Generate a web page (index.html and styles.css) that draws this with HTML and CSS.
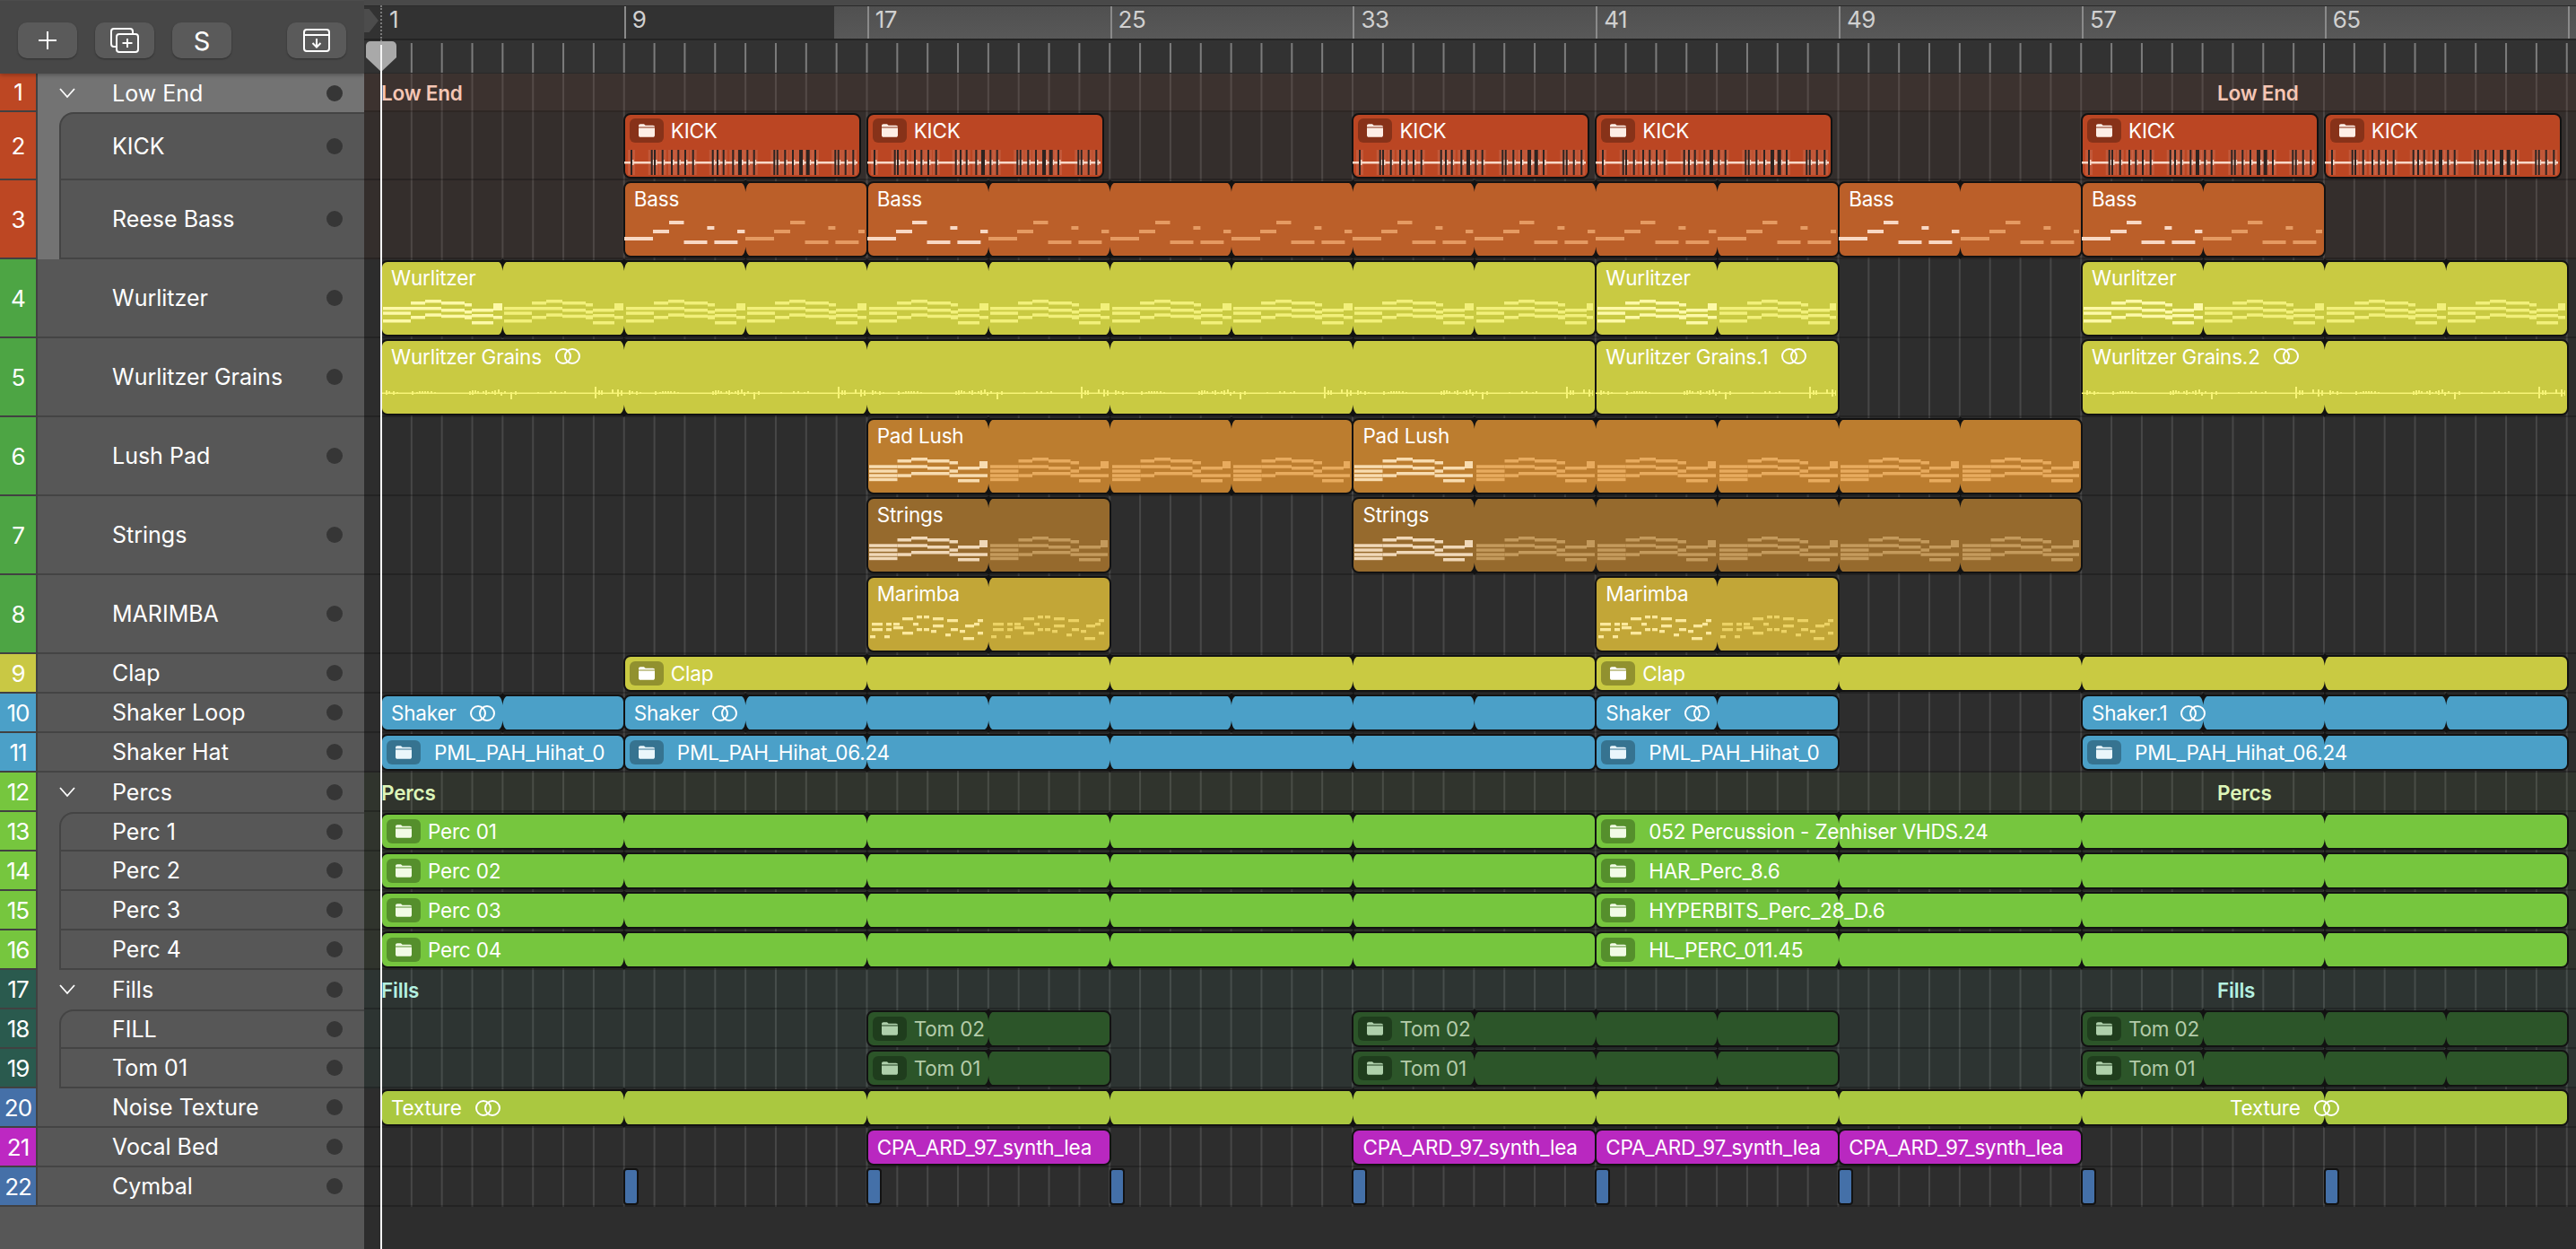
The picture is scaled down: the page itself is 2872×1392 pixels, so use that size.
FILE: index.html
```html
<!DOCTYPE html>
<html lang="en">
<head>
    <meta charset="UTF-8">
    <title>Arrangement</title>
    <link rel="stylesheet" href="styles.css">
</head>
<body>

<div class="window">
    <div class="tracklist">
        <div class="toolbar">
            <button class="tool-btn">
                <svg width="24" height="24" viewBox="0 0 24 24"><path d="M12 2V22M2 12H22"/></svg>
            </button>
            <button class="tool-btn">
                <svg width="34" height="28" viewBox="0 0 34 28"><path d="M7 21H5a3 3 0 0 1-3-3V4a3 3 0 0 1 3-3H23a3 3 0 0 1 3 3V7"/><rect x="8" y="7" width="24" height="20" rx="3"/><path d="M20 12V22M14.5 17H25.5"/></svg>
            </button>
            <button class="tool-btn tool-s">S</button>
            <button class="tool-btn tool-last">
                <svg width="32" height="26" viewBox="0 0 32 26"><rect x="2" y="1" width="28" height="24" rx="3"/><path d="M2 7H30M16 11V20M11.500 16L16 20.500 20.500 16"/></svg>
            </button>
        </div>

        <div class="track h-43 selected"><div class="num c1">1</div><div class="body group"><svg class="chev" width="18" height="12" viewBox="0 0 18 12"><path d="M1 1L9 10 17 1"/></svg><span class="name">Low End</span><i class="dot"></i></div></div>
        <div class="track h-76 selected"><div class="num c1">2</div><div class="strip"><div class="tile top"><span class="name">KICK</span><i class="dot"></i></div></div></div>
        <div class="track h-88 selected"><div class="num c1">3</div><div class="strip"><div class="tile"><span class="name">Reese Bass</span><i class="dot"></i></div></div></div>
        <div class="track h-88"><div class="num c4">4</div><div class="body"><span class="name">Wurlitzer</span><i class="dot"></i></div></div>
        <div class="track h-88"><div class="num c4">5</div><div class="body"><span class="name">Wurlitzer Grains</span><i class="dot"></i></div></div>
        <div class="track h-88"><div class="num c4">6</div><div class="body"><span class="name">Lush Pad</span><i class="dot"></i></div></div>
        <div class="track h-88"><div class="num c4">7</div><div class="body"><span class="name">Strings</span><i class="dot"></i></div></div>
        <div class="track h-88"><div class="num c4">8</div><div class="body"><span class="name">MARIMBA</span><i class="dot"></i></div></div>
        <div class="track h-44"><div class="num c9">9</div><div class="body"><span class="name">Clap</span><i class="dot"></i></div></div>
        <div class="track h-44"><div class="num c10">10</div><div class="body"><span class="name">Shaker Loop</span><i class="dot"></i></div></div>
        <div class="track h-44"><div class="num c10">11</div><div class="body"><span class="name">Shaker Hat</span><i class="dot"></i></div></div>
        <div class="track h-44"><div class="num c12">12</div><div class="body group"><svg class="chev" width="18" height="12" viewBox="0 0 18 12"><path d="M1 1L9 10 17 1"/></svg><span class="name">Percs</span><i class="dot"></i></div></div>
        <div class="track h-44"><div class="num c12">13</div><div class="strip"><div class="tile top"><span class="name">Perc 1</span><i class="dot"></i></div></div></div>
        <div class="track h-44"><div class="num c12">14</div><div class="strip"><div class="tile"><span class="name">Perc 2</span><i class="dot"></i></div></div></div>
        <div class="track h-44"><div class="num c12">15</div><div class="strip"><div class="tile"><span class="name">Perc 3</span><i class="dot"></i></div></div></div>
        <div class="track h-44"><div class="num c12">16</div><div class="strip"><div class="tile"><span class="name">Perc 4</span><i class="dot"></i></div></div></div>
        <div class="track h-44"><div class="num c17">17</div><div class="body group"><svg class="chev" width="18" height="12" viewBox="0 0 18 12"><path d="M1 1L9 10 17 1"/></svg><span class="name">Fills</span><i class="dot"></i></div></div>
        <div class="track h-44"><div class="num c17">18</div><div class="strip"><div class="tile top"><span class="name">FILL</span><i class="dot"></i></div></div></div>
        <div class="track h-44"><div class="num c17">19</div><div class="strip"><div class="tile"><span class="name">Tom 01</span><i class="dot"></i></div></div></div>
        <div class="track h-44"><div class="num c20">20</div><div class="body"><span class="name">Noise Texture</span><i class="dot"></i></div></div>
        <div class="track h-44"><div class="num c21">21</div><div class="body"><span class="name">Vocal Bed</span><i class="dot"></i></div></div>
        <div class="track h-44"><div class="num c20">22</div><div class="body"><span class="name">Cymbal</span><i class="dot"></i></div></div>
    </div>

    <div class="arrange">
        <div class="top-strip"></div>
        <div class="ruler">
            <div class="ruler-dark"></div>
            <div class="ruler-offset"></div>
            <div class="bar-label">1</div>
            <div class="bar-label">9</div>
            <div class="bar-label">17</div>
            <div class="bar-label">25</div>
            <div class="bar-label">33</div>
            <div class="bar-label">41</div>
            <div class="bar-label">49</div>
            <div class="bar-label">57</div>
            <div class="bar-label">65</div>
            <div class="bar-label"></div>
            <div class="cycle-mark"></div>
        </div>
        <div class="ticks"></div>
        <div class="lanes" id="lanes"></div>

        <!-- playhead sits over everything -->
        <div class="play-dash"></div>
        <svg class="play-head" width="34" height="34" viewBox="0 0 34 34"><path d="M5 0H29a5 5 0 0 1 5 5V18L17 34 0 18V5a5 5 0 0 1 5-5Z"/></svg>
        <div class="play-line"></div>
    </div>
</div>

<script src="script.js"></script>
</body>
</html>
```

FILE: styles.css
```css
* {
    margin: 0;
    padding: 0;
    box-sizing: border-box;
    font-family: 'Inter', 'Noto Sans', sans-serif;
}

body {
    width: 2872px;
    height: 1392px;
    overflow: hidden;
    background: #2d2d2d;
}

.window {
    display: flex;
    height: 100%;
}

/* Track list on the left */
.tracklist {
    width: 406px;
    flex: none;
    background: #575757;
    display: flex;
    flex-direction: column;
}

.toolbar {
    height: 82px;
    flex: none;
    display: flex;
    gap: 20px;
    padding: 24px 0 0 20px;
    background: #474747;
    border-top: 1px solid #4c4c4c;
    box-shadow: 0 2px 4px rgba(0, 0, 0, 0.25);
    position: relative;
}

.tool-btn {
    width: 66px;
    height: 40px;
    background: #5a5a5a;
    border: none;
    border-radius: 10px;
    box-shadow: 0 1px 2px rgba(0, 0, 0, 0.35);
    color: #fff;
    font-size: 29px;
    display: flex;
    align-items: center;
    justify-content: center;
}

.tool-btn svg {
    fill: none;
    stroke: #fff;
    stroke-width: 2;
}

.tool-last {
    margin-left: 42px;
}

.track {
    display: flex;
    flex: none;
}

.h-43 { height: 43px; }
.h-44 { height: 44px; }
.h-76 { height: 76px; }
.h-88 { height: 88px; }

.num {
    width: 42px;
    flex: none;
    display: flex;
    align-items: center;
    justify-content: center;
    color: #fff;
    font-size: 26px;
    letter-spacing: -1px;
    border-right: 2px solid #414141;
    border-bottom: 2px solid #414141;
}

.c1 { background: #bd4723; }
.c4 { background: #4da544; }
.c9 { background: #c9c844; }
.c10 { background: #4ba0c8; }
.c12 { background: #76c63e; }
.c17 { background: #2a5a4e; }
.c20 { background: #4570a8; }
.c21 { background: #bd28c2; }

.body {
    flex: 1;
    display: flex;
    align-items: center;
    padding: 0 24px 0 83px;
    border-bottom: 2px solid #444;
}

.body.group {
    padding-left: 24px;
    border-bottom: none;
}

.chev {
    fill: none;
    stroke: #fff;
    stroke-width: 1.8;
    margin-right: 41px;
    flex: none;
}

.strip {
    flex: 1;
    padding-left: 24px;
}

.tile {
    height: 100%;
    display: flex;
    align-items: center;
    padding: 0 24px 0 57px;
    background: #575757;
    border-left: 2px solid #444;
    border-bottom: 2px solid #444;
}

.tile.top {
    border-top: 2px solid #444;
    border-top-left-radius: 16px;
}

.selected .body,
.selected .strip {
    background: #737373;
}

.selected .tile {
    background: #565656;
}

.name {
    flex: 1;
    color: #fff;
    font-size: 25px;
    white-space: nowrap;
}

.dot {
    width: 18px;
    height: 18px;
    border-radius: 50%;
    background: #363636;
    flex: none;
}

/* Timeline */
.arrange {
    flex: 1;
    position: relative;
    overflow: hidden;
}

.top-strip {
    height: 6px;
    background: #494949;
}

.ruler {
    height: 39px;
    display: flex;
    position: relative;
    background: linear-gradient(#505050, #585858);
    border-top: 1px solid #2a2a2a;
    border-bottom: 2px solid #242424;
    overflow: hidden;
}

.ruler-dark {
    position: absolute;
    left: 0;
    top: 0;
    bottom: 0;
    width: 524px;
    background: #323232;
}

.ruler-offset {
    width: 19px;
    flex: none;
}

.bar-label {
    width: 270.857px;
    flex: none;
    padding-left: 7px;
    line-height: 30px;
    color: #d0d0d0;
    font-size: 26px;
    letter-spacing: -0.5px;
    border-left: 2px solid #8a8a8a;
    position: relative;
}

.ruler-offset + .bar-label {
    border-left-color: transparent;
}

.cycle-mark {
    position: absolute;
    left: 0;
    top: 3px;
    width: 16px;
    height: 26px;
    background: #4c4c4c;
    clip-path: polygon(0 0, 35% 0, 100% 50%, 35% 100%, 0 100%);
}

.ticks {
    height: 37px;
    background-color: #323232;
    background-image: linear-gradient(90deg, #7c7c7c 2px, transparent 2px);
    background-size: 33.857px 34px;
    background-position: 18px 3px;
    background-repeat: repeat-x;
    box-shadow: inset 0 -1px 0 #292929;
}

.lanes {
    background-image: linear-gradient(90deg, rgba(255, 255, 255, 0.12) 2px, transparent 2px);
    background-size: 33.857px 100%;
    background-position: 18px 0;
    background-repeat: repeat-x;
}

.lane {
    position: relative;
    border-bottom: 2px solid rgba(0, 0, 0, 0.22);
}

.tint-red { background-color: rgba(190, 70, 35, 0.05); }
.tint-red-top { background-color: rgba(220, 110, 80, 0.09); }
.tint-green { background-color: rgba(120, 200, 60, 0.05); }
.tint-teal { background-color: rgba(60, 160, 130, 0.07); }

.lane-label {
    position: absolute;
    top: 0;
    height: 100%;
    padding-top: 2px;
    display: flex;
    align-items: center;
    font-size: 22.5px;
    font-weight: 600;
    letter-spacing: -0.2px;
}

.lane-label.red { color: #f5c6b4; }
.lane-label.green { color: #dcf5b8; }
.lane-label.teal { color: #b4f0e0; }

/* Regions */
.region {
    position: absolute;
    top: 1px;
    bottom: 0;
    background: var(--fill);
    border: 2.5px solid #121212;
    border-radius: 8px;
    color: var(--label, #fff);
}

.c-kick { --fill: #bb4623; --icon: #fdeee6; --note: #f8d8c8; --note-first: #f8d8c8; }
.c-bass { --fill: #bb5f29; --note: #e59a62; --note-first: #f8d8c4; }
.c-wurli { --fill: #c9ca42; --note: #f2f07a; --note-first: #fdf9a8; }
.c-pad { --fill: #bc7d2f; --note: #e8ab5e; --note-first: #f8dcb0; }
.c-strings { --fill: #966a2d; --note: #c49a5c; --note-first: #f0d8b8; }
.c-marimba { --fill: #c2a637; --note: #ecd264; --note-first: #fbe89c; }
.c-shaker { --fill: #4ba0c8; --icon: #eaf6fb; }
.c-perc { --fill: #76c63e; --icon: #f2fbe6; }
.c-tom { --fill: #2c5529; --label: #b4ccaa; --icon: #aed0ab; }
.c-texture { --fill: #aac840; }
.c-vocal { --fill: #b928c0; }
.c-cymbal { --fill: #4470a8; border-radius: 4px; }

.region-head {
    position: absolute;
    top: 0;
    left: 0;
    height: 34px;
    padding-left: 10px;
    display: flex;
    align-items: center;
    font-size: 22.5px;
    letter-spacing: -0.2px;
    white-space: nowrap;
}

.h-44 .region-head {
    height: 100%;
}

.region-head.has-folder {
    padding-left: 5px;
}

.second-head {
    padding-left: 0;
}

.badge {
    width: 38px;
    height: 27px;
    margin-right: 8px;
    flex: none;
    display: flex;
    align-items: center;
    justify-content: center;
    background: rgba(0, 0, 0, 0.28);
    border-radius: 6px;
}

.badge.wide {
    margin-right: 15px;
}

.badge svg {
    fill: var(--icon, #fff);
}

.loop {
    margin-left: 15px;
    fill: none;
    stroke: var(--label, #fff);
    stroke-width: 2;
    flex: none;
}

.notes {
    position: absolute;
    top: -3px;
    height: 88px;
}

.notes rect {
    fill: var(--note);
}

.notes.first rect {
    fill: var(--note-first);
}

.notes rect.kick-bar {
    fill: #2e2320;
}

.notes rect.kick-halo {
    fill: rgba(255, 255, 255, 0.1);
}

.notes rect.wave {
    fill: #f7f476;
}

/* notch where a looped region repeats, reaches a little into the gap between lanes */
.join {
    position: absolute;
    top: -5px;
    bottom: -5px;
    width: 14px;
    transform: translateX(-7px);
}

.join::before,
.join::after {
    content: "";
    position: absolute;
    left: 0;
    width: 14px;
    height: 15px;
    background: #121212;
    clip-path: path("M7 0C7 2 8 3.500 14 4C10 4.500 7.600 8 7 15C6.400 8 4 4.500 0 4C6 3.500 7 2 7 0Z");
}

.join::before { top: 0; }
.join::after { bottom: 0; transform: scaleY(-1); }

/* Playhead */
.play-dash {
    position: absolute;
    left: 18px;
    top: 6px;
    height: 40px;
    border-left: 2px dotted #7a7a7a;
}

.play-head {
    position: absolute;
    left: 2px;
    top: 46px;
    fill: #a9a9a9;
}

.play-line {
    position: absolute;
    left: 18px;
    top: 50px;
    bottom: 0;
    width: 2px;
    background: #f4f4f4;
}
```

FILE: script.js
```js
const BAR = 33.857;
const ORIGIN = 19;

function barX(bar) {
    return ORIGIN + (bar - 1) * BAR;
}

// note shapes, [x, width, y, height] measured from the bar line and lane top
function chordNotes(blocks) {
    const out = [];
    blocks.forEach(([x, w, ys]) => {
        ys.forEach(y => {
            if (Array.isArray(y)) out.push([x, w, y[0], y[1]]);
            else out.push([x, w, y, 3.5]);
        });
    });
    return out;
}

const WURLI = chordNotes([
    [2, 31, [53, 58.3, 67]],
    [33, 16, [47, 53, 63]],
    [49, 18, [45, 53, 60.3]],
    [67, 26, [47, 55, 61.7]],
    [93, 8, [49, 57, [62.3, 4.5]]],
    [101, 24, [55, 61, 69]],
    [125, 10, [[49, 8], 63]]
]);

const PAD = chordNotes([
    [2, 31.5, [53.3, 58.3, 63.3, 67.7]],
    [33.5, 15.5, [47, 53.3, 63.3]],
    [49, 18, [45, 53.3, 61]],
    [67, 24.5, [47, 55, 61]],
    [91.5, 9.5, [49, 58.3, 63.3]],
    [101, 24, [55, 63.3, 69]],
    [125, 9, [[49, 8], 63.3]]
]);

const BASS = [
    [0, 32, 63, 4], [32, 18, 55, 4], [50, 16.500, 45, 4], [66.500, 26, 67, 4],
    [92.400, 8, 51, 4], [100.400, 26, 67, 4], [126, 8.400, 55, 4]
];

const MARIMBA = [
    [5, 12, 53], [5, 12, 59], [3, 6, 67], [19, 6, 67], [21, 6, 53], [21, 6, 59],
    [29, 7, 53], [29, 11, 57], [39, 12, 47], [39, 12, 63], [51, 6, 53], [55, 6, 45],
    [63, 6, 45], [55, 6, 59], [63, 6, 59], [73, 12, 47], [73, 12, 55], [71, 6, 61],
    [89, 12, 49], [87, 6, 65], [93, 8, 59], [103, 6, 61], [109, 10, 55], [119, 6, 53],
    [123, 6, 49], [107, 12, 69], [123, 6, 63]
].map(n => [n[0], n[1], n[2], 3.3]);

const KICK_BARS = [7, 29.7, 33, 41.7, 52, 59.3, 67, 75.7, 97.7, 103, 109.7, 120.3, 127, 136.3,
    143.7, 166.3, 169.7, 178.3, 187, 195, 202.7, 212, 234.3, 237.7, 245.7, 254.3];
const KICK_THICK = [127, 195, 202.7];

// [x, up, down]
const GRAIN = [[5, 3, 2], [8, 2, 1], [13, 2, 2], [17, 1, 1], [34, 2, 2], [39, 1, 1], [42, 2, 1], [45, 2, 1],
    [48, 2, 1], [51, 2, 1], [55, 2, 1], [59, 1, 1], [98, 2, 2], [101, 3, 2], [104, 3, 1], [107, 2, 1],
    [113, 2, 1], [116, 3, 2], [119, 1, 1], [123, 2, 1], [126, 3, 2], [130, 4, 1], [133, 1, 3], [137, 2, 1],
    [144, 1, 7], [149, 2, 2], [174, 1, 1], [188, 2, 1], [193, 2, 1], [200, 1, 1], [204, 2, 1], [238, 7, 6],
    [242, 3, 2], [245, 3, 2], [257, 4, 1], [263, 4, 4], [267, 3, 3]];

function rects(list) {
    return list.map(n => `<rect x="${n[0]}" y="${n[2]}" width="${n[1]}" height="${n[3]}"/>`).join('');
}

function kickSvg() {
    let out = '';
    KICK_BARS.forEach(x => {
        const w = KICK_THICK.includes(x) ? 4 : 2;
        out += `<rect class="kick-halo" x="${x - 3}" y="42" width="${w + 6}" height="28"/>`;
    });
    out += '<rect x="0" y="55" width="263" height="2.500"/>';
    KICK_BARS.forEach(x => {
        const w = KICK_THICK.includes(x) ? 4 : 2;
        out += `<rect x="${x + w}" y="53" width="1.500" height="6"/>`;
        out += `<rect class="kick-bar" x="${x}" y="42" width="${w}" height="28"/>`;
    });
    return out;
}

function grainSvg() {
    let out = '<rect class="wave" x="0" y="60.500" width="271" height="1.500"/>';
    GRAIN.forEach(([x, up, down]) => {
        out += `<rect class="wave" x="${x}" y="${61 - up}" width="2" height="${up + down}"/>`;
    });
    return out;
}

const PATTERNS = {
    wurli: () => rects(WURLI),
    pad: () => rects(PAD),
    bass: () => rects(BASS),
    marimba: () => rects(MARIMBA),
    grain: grainSvg,
    kick: kickSvg
};

const FOLDER_ICON = '<svg width="18" height="15" viewBox="0 0 18 15"><path d="M0 3.500V2.200C0 1 .8.200 2 .200H6l1.600 1.600H16c1.200 0 2 .8 2 1.700Z"/><path d="M0 4.500H18V12.500C18 13.900 17.200 14.800 16 14.800H2C.8 14.800 0 13.900 0 12.500Z"/></svg>';
const LOOP_ICON = '<svg class="loop" width="28" height="18" viewBox="0 0 28 18"><circle cx="9" cy="9" r="8"/><circle cx="19" cy="9" r="8"/></svg>';

function headHtml(r, label, extraClass) {
    let html = `<div class="region-head ${r.folder ? 'has-folder' : ''} ${extraClass || ''}">`;
    if (r.folder) html += `<span class="badge ${r.wide ? 'wide' : ''}">${FOLDER_ICON}</span>`;
    html += `<span>${label}</span>`;
    if (r.loop) html += LOOP_ICON;
    return html + '</div>';
}

function regionHtml(r) {
    const left = barX(r.from) - 1;
    const width = r.px ? r.px : barX(r.to) - barX(r.from) + 2;
    let html = `<div class="region c-${r.color}" style="left:${left}px;width:${width}px">`;

    const every = r.every || 0;
    if (r.notes) {
        const step = every || (r.to - r.from);
        for (let b = r.from, i = 0; b < r.to; b += step, i++) {
            const x = (b - r.from) * BAR - 1;
            const last = b + step >= r.to;
            const w = r.px ? r.px - 5 : step * BAR - (last ? 3 : 0);
            const first = i === 0 ? 'first' : '';
            html += `<svg class="notes ${first}" style="left:${x}px;width:${w}px">${PATTERNS[r.notes]()}</svg>`;
        }
    }
    if (every) {
        for (let b = r.from + every; b < r.to; b += every) {
            html += `<div class="join" style="left:${(b - r.from) * BAR - 1}px"></div>`;
        }
    }
    if (r.label) html += headHtml(r, r.label);
    html += '</div>';
    return html;
}

function kick(from) {
    return { from, to: from + 8, px: 265, color: 'kick', label: 'KICK', folder: true, notes: 'kick' };
}

function kind(color, notes, extra) {
    return (label, from, to, every) => Object.assign({ label, from, to, every, color, notes }, extra);
}

const bass = kind('bass', 'bass');
const wurli = kind('wurli', 'wurli');
const grains = kind('wurli', 'grain', { loop: true });
const pad = kind('pad', 'pad');
const strings = kind('strings', 'pad');
const marimba = kind('marimba', 'marimba');
const clap = kind('wurli', null, { folder: true });
const shaker = kind('shaker', null, { loop: true });
const hat = kind('shaker', null, { folder: true, wide: true });
const perc = kind('perc', null, { folder: true });
const percWide = kind('perc', null, { folder: true, wide: true });
const tom = kind('tom', null, { folder: true });
const vocal = kind('vocal', null);
const HIHAT_LONG = 'PML_PAH_Hihat_06.24';
const HIHAT = 'PML_PAH_Hihat_0';
const SYNTH = 'CPA_ARD_97_synth_lea';

const LANES = [
    { h: 43, tint: 'tint-red-top', title: ['Low End', 'red'] },
    { h: 76, tint: 'tint-red', regions: [kick(9), kick(17), kick(33), kick(41), kick(57), kick(65)] },
    { h: 88, tint: 'tint-red', regions: [bass('Bass', 9, 17, 4), bass('Bass', 17, 49, 4), bass('Bass', 49, 57, 4), bass('Bass', 57, 65, 4)] },
    { h: 88, regions: [wurli('Wurlitzer', 1, 41, 4), wurli('Wurlitzer', 41, 49, 4), wurli('Wurlitzer', 57, 73, 4)] },
    { h: 88, regions: [grains('Wurlitzer Grains', 1, 41, 8), grains('Wurlitzer Grains.1', 41, 49, 8), grains('Wurlitzer Grains.2', 57, 73, 8)] },
    { h: 88, regions: [pad('Pad Lush', 17, 33, 4), pad('Pad Lush', 33, 57, 4)] },
    { h: 88, regions: [strings('Strings', 17, 25, 4), strings('Strings', 33, 57, 4)] },
    { h: 88, regions: [marimba('Marimba', 17, 25, 4), marimba('Marimba', 41, 49, 4)] },
    { h: 44, regions: [clap('Clap', 9, 41, 8), clap('Clap', 41, 73, 8)] },
    { h: 44, regions: [shaker('Shaker', 1, 9, 4), shaker('Shaker', 9, 41, 4), shaker('Shaker', 41, 49, 4), shaker('Shaker.1', 57, 73, 4)] },
    { h: 44, regions: [hat(HIHAT, 1, 9, 8), hat(HIHAT_LONG, 9, 41, 8), hat(HIHAT, 41, 49, 8), hat(HIHAT_LONG, 57, 73, 8)] },
    { h: 44, tint: 'tint-green', title: ['Percs', 'green'] },
    { h: 44, tint: 'tint-green', regions: [perc('Perc 01', 1, 41, 8), percWide('052 Percussion - Zenhiser VHDS.24', 41, 73, 8)] },
    { h: 44, tint: 'tint-green', regions: [perc('Perc 02', 1, 41, 8), percWide('HAR_Perc_8.6', 41, 73, 8)] },
    { h: 44, tint: 'tint-green', regions: [perc('Perc 03', 1, 41, 8), percWide('HYPERBITS_Perc_28_D.6', 41, 73, 8)] },
    { h: 44, tint: 'tint-green', regions: [perc('Perc 04', 1, 41, 8), percWide('HL_PERC_011.45', 41, 73, 8)] },
    { h: 44, tint: 'tint-teal', title: ['Fills', 'teal'] },
    { h: 44, tint: 'tint-teal', regions: [tom('Tom 02', 17, 25, 4), tom('Tom 02', 33, 49, 4), tom('Tom 02', 57, 73, 4)] },
    { h: 44, tint: 'tint-teal', regions: [tom('Tom 01', 17, 25, 4), tom('Tom 01', 33, 49, 4), tom('Tom 01', 57, 73, 4)] },
    { h: 44, regions: [{ label: 'Texture', from: 1, to: 73, every: 8, color: 'texture', loop: true, second: 'Texture' }] },
    { h: 44, regions: [vocal(SYNTH, 17, 25), vocal(SYNTH, 33, 41), vocal(SYNTH, 41, 49), vocal(SYNTH, 49, 57)] },
    { h: 44, regions: [9, 17, 25, 33, 41, 49, 57, 65].map(b => ({ from: b, to: b + 1, px: 17, color: 'cymbal' })) }
];

const lanesEl = document.getElementById('lanes');

LANES.forEach(lane => {
    const el = document.createElement('div');
    el.className = `lane h-${lane.h} ${lane.tint || ''}`;
    let html = '';
    if (lane.title) {
        // folder tracks repeat their name further along the timeline
        html += `<div class="lane-label ${lane.title[1]}" style="left:${ORIGIN}px">${lane.title[0]}</div>`;
        html += `<div class="lane-label ${lane.title[1]}" style="left:2066px">${lane.title[0]}</div>`;
    }
    (lane.regions || []).forEach(r => {
        let part = regionHtml(r);
        if (r.second) {
            const head = headHtml(r, r.second, 'second-head').replace('class="', 'style="left:2060px" class="');
            part = part.replace(/<\/div>$/, head + '</div>');
        }
        html += part;
    });
    el.innerHTML = html;
    lanesEl.appendChild(el);
});
```
